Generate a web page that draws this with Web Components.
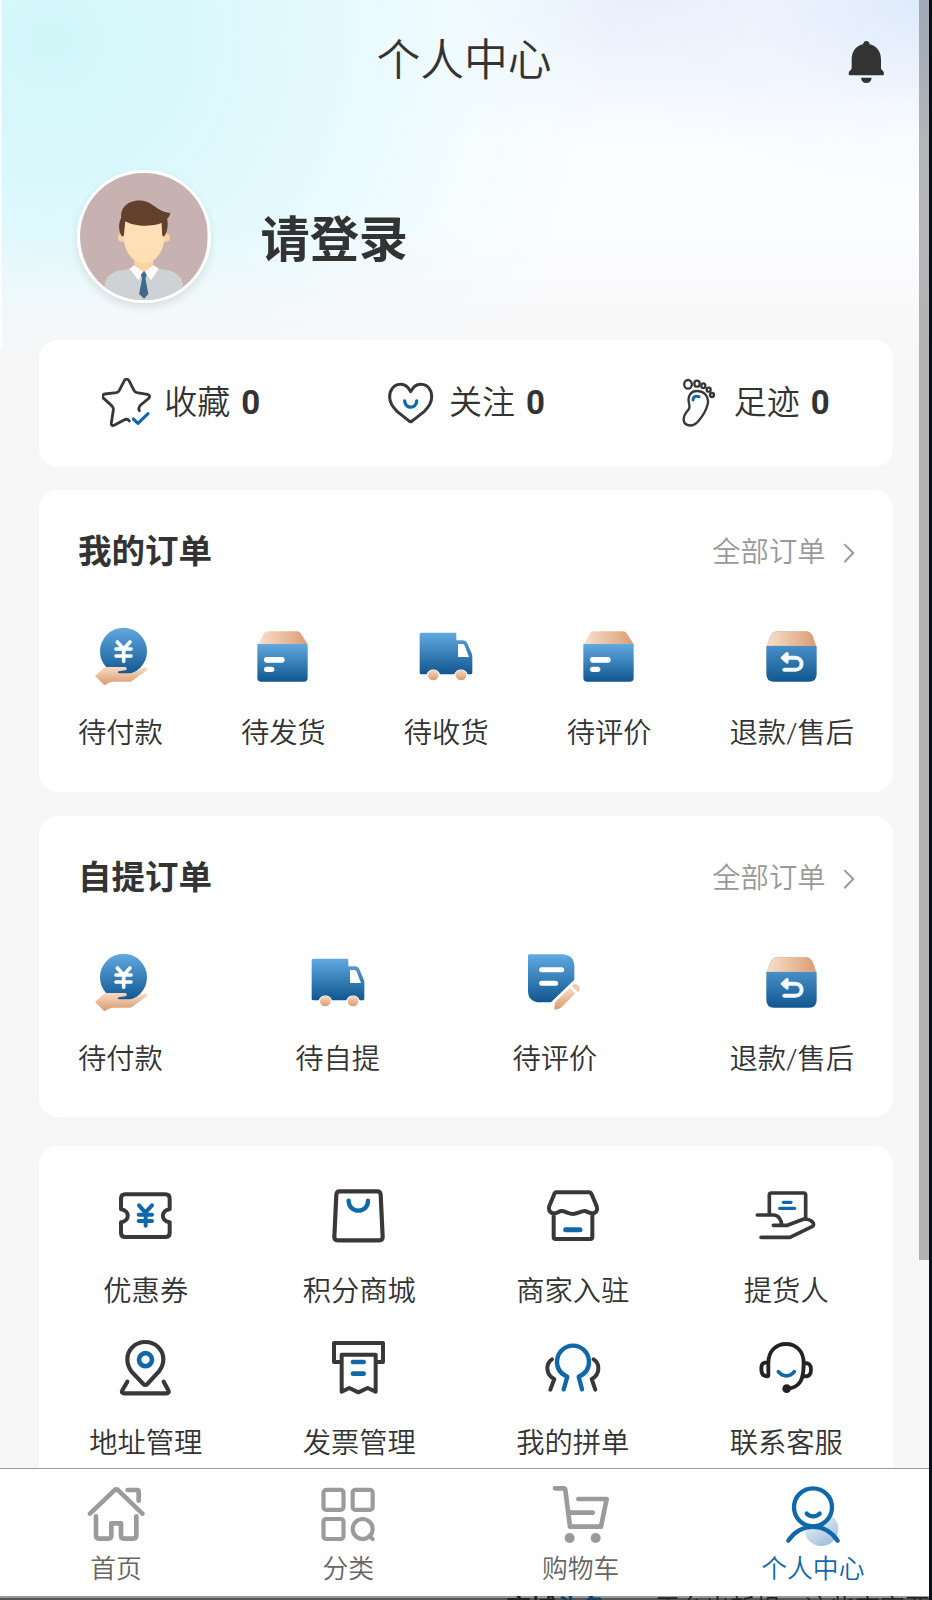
<!DOCTYPE html>
<html lang="zh-CN">
<head>
<meta charset="utf-8">
<title>个人中心</title>
<style>
  html, body {
    margin: 0;
    height: 1600px;
    overflow: hidden;
  }
  body {
    background: #0b0e17;
    color: #333;
    font-family: Roboto, "Noto Sans CJK SC", sans-serif;
    font-size: 28.3px;
    font-weight: 350;
  }
</style>
</head>
<body>
<user-center></user-center>

<script>
(function (customElements) {

    // Shared gradients for the filled order icons.
    const DEFS = `
  <defs>
    <linearGradient id="blue" x1="0" y1="0" x2="0" y2="1"><stop offset="0" stop-color="#61a9e1"/><stop offset="1" stop-color="#11568f"/></linearGradient>
    <linearGradient id="blue2" x1="0" y1="0" x2="0" y2="1"><stop offset="0" stop-color="#478fc8"/><stop offset="1" stop-color="#11568f"/></linearGradient>
    <linearGradient id="skin" x1="0" y1="0" x2="0" y2="1"><stop offset="0" stop-color="#f6dcc6"/><stop offset="1" stop-color="#dc9a6e"/></linearGradient>
    <linearGradient id="lid" x1="0" y1="0" x2="1" y2="0"><stop offset="0" stop-color="#f8e0cc"/><stop offset="1" stop-color="#db9c73"/></linearGradient>
    <linearGradient id="halo" x1="0" y1="0" x2=".6" y2="1"><stop offset="0" stop-color="#fff"/><stop offset="1" stop-color="#a3c1dc"/></linearGradient>
  </defs>`;

    const ICONS = {
        bell: ['1140 116 120 138', `
      <path fill="#333" d="M1201 122c6 0 9 4 10 10 22 5 34 22 34 46v25c0 6 9 8 9 17 0 3-2 5-5 5h-96c-3 0-5-2-5-5 0-9 9-11 9-17v-25c0-24 12-41 34-46 1-6 4-10 10-10z"/>
      <path fill="#333" d="M1185 232h32c-1 10-7 16-16 16s-15-6-16-16z"/>`],
        star: ['215 117 150 150', `
      <path class="line" stroke-width="8.500" d="M327 215c-4-7-1-12 4-17l24-20c5-5 2-11-4-12l-31-5c-5-1-7-3-9-7l-15-29c-4-6-11-6-14 0l-15 29c-2 4-4 6-9 7l-34 4c-7 1-10 8-4 13l24 22c4 4 6 8 5 13l-6 39c-1 8 4 9 10 6l28-15c5-3 12-4 16 3"/>
      <path class="accent" stroke-width="9.500" d="M309 240l14 13 30-29"/>`],
        heart: ['1069 117 150 150', `
      <path class="line" stroke-width="9" d="M1140 158c8-16 20-23 32-22 20 1 32 18 31 39 0 18-10 30-22 42l-35 28c-4 4-8 4-12 0l-35-28c-12-12-22-24-22-42-1-21 12-38 31-39 13-1 24 6 32 22z"/>
      <path class="accent" stroke-width="10" d="M1122 186c2 25 35 24 36 0"/>`],
        foot: ['633 117 150 150', `
      <g class="line" stroke-width="7"><ellipse cx="681" cy="136" rx="11.500" ry="13"/><ellipse cx="708" cy="134" rx="8" ry="9"/><ellipse cx="727" cy="140" rx="6" ry="7"/><circle cx="743" cy="152" r="6"/><circle cx="753" cy="168" r="6"/>
      <path d="M684 193c-5-22 6-37 22-37 26 0 39 18 34 40-5 20-15 36-27 49-11 13-25 17-36 12-13-6-11-25-2-36 8-9 13-14 9-28z"/></g>
      <path class="accent" stroke-width="9" stroke-linecap="butt" d="M696 183c0-10 8-14 18-10"/>`],
        pay: ['81 72 198 198', `
      <circle fill="url(#blue)" cx="190.500" cy="154" r="70.500"/>
      <path fill="none" stroke="#fff" stroke-width="11" stroke-linecap="round" stroke-linejoin="round" d="M172 126l19 21 19-21M168 147h45M168 168h45M191 148v36"/>
      <path fill="url(#skin)" d="M105 228l27-25q3-2 7-2h56c7 0 7 9 1 10l-20 3c-3 1-3 6 1 6h38l36-16c8-4 13 3 8 8l-43 31q-3 2-6 2h-49c-12 1-15 3-25 9q-3 2-6-1z"/>`],
        box: ['570 72 198 198', `
      <path fill="url(#lid)" d="M594 133l18-33q4-6 11-6h89q6 0 10 6l21 33z"/>
      <path fill="url(#blue)" d="M592 132h151v101q0 12-12 12H604q-12 0-12-12z"/>
      <rect x="612" y="171" width="62" height="17" rx="8.500" fill="#fff"/><rect x="612" y="200" width="31" height="16" rx="8" fill="#fff"/>`],
        truck: ['731 59 198 198', `
      <path fill="url(#blue)" d="M756 85h101q4 0 4 4v19h21q8 0 12 8l14 34q1 3 1 7v48q0 5-5 5h-9a21 21 0 0 0-40 0h-43a21 21 0 0 0-40 0h-16q-5 0-5-5V90q0-5 5-5z"/>
      <path fill="#fff" d="M866 119h14q4 0 6 5l13 34h-33z"/>
      <circle fill="url(#skin)" cx="792" cy="212" r="16"/><circle fill="url(#skin)" cx="875" cy="212" r="16"/>`],
        note: ['127 60 198 198', `
      <path fill="url(#blue)" d="M149 73h101q34 3 34 36v40l-70 68h-33q-36-1-36-35V78q0-5 4-5z"/>
      <path fill="none" stroke="#fff" stroke-width="15" stroke-linecap="round" d="M186 119h60M186 160h42"/>
      <path fill="url(#skin)" d="M270 173l17 17-43 43q-3 2-7 3l-10 3q-3 0-3-4l2-15q0-3 3-6z"/>
      <path fill="#efcbae" d="M276 167q7-8 15-4 8 5 10 12 1 6-6 12z"/>`],
        refund: ['897 72 198 198', `
      <path fill="url(#lid)" stroke="#b9b4ae" stroke-width="1.500" d="M921 138l10-28q7-15 17-16h92q12 1 19 16l9 28z"/>
      <path fill="url(#blue2)" d="M919 138h151v84q0 23-23 23H942q-23 0-23-23z"/>
      <path fill="none" stroke="#f3f8fc" stroke-width="12" stroke-linecap="round" stroke-linejoin="round" d="M975 173h31c25 1 25 36 0 36h-33"/>
      <path fill="#f3f8fc" d="M963 171l15-14q8-3 8 4v25q-1 8-8 4l-15-14q-3-3 0-5z"/>`],
        coupon: ['159 40 198 198', `
      <path class="line" stroke-width="12" d="M196 74h120q13 0 13 13v32c-27 4-27 35 0 39v31q0 13-13 13H196q-13 0-13-13v-31c27-4 27-35 0-39V87q0-13 13-13z"/>
      <path class="accent" stroke-width="12" d="M237 107l19 22 20-22M236 135h40M236 154h40M257 130v38"/>`],
        bag: ['799 38 198 198', `
      <path class="line" stroke-width="12.500" d="M840 63h113q9 0 10 10l6 127q0 10-10 10H834q-10 0-10-10l6-127q1-10 10-10z"/>
      <path class="accent" stroke-width="13" d="M867 91c0 40 58 40 58 0"/>`],
        shop: ['180 39 198 198', `
      <path class="line" stroke-width="12" d="M229 67h98q5 0 8 6l15 36c4 11-1 21-13 21-10 0-16-7-24-7-10 0-22 9-34 9-13 0-24-9-34-9-9 0-14 8-24 7-13-1-17-13-13-22l14-34q2-7 7-7zM221 131v71q0 5 6 5h104q6 0 6-5v-71"/>
      <path class="accent" stroke-width="15" d="M257 179h43"/>`],
        pickup: ['819 40 198 198', `
      <path class="line" stroke-width="11" stroke-linecap="butt" d="M832 136h48c15 0 25 14 25 31M868 136V76q0-6 6-6h97q6 0 6 6v70M880 167h42l50-19c24 0 36 17 24 23l-66 32h-87"/>
      <path class="accent" stroke-width="10" stroke-linecap="butt" d="M910 98h23M899 116h45"/>`],
        place: ['159 496 198 198', `
      <path class="line" stroke-width="12.500" d="M256 517c-32 0-54 24-54 52 0 14 5 26 12 36l36 38q6 6 12 0l35-38c8-10 13-22 13-36 0-28-22-52-54-52zM202 636l-15 26q-4 9 5 9h128q9 0 5-9l-14-26"/>
      <circle class="accent" stroke-width="14" cx="256.500" cy="570" r="19.500"/>`],
        invoice: ['799 496 198 198', `
      <path class="line" stroke-width="12" stroke-linejoin="round" d="M846 577h-23v-57h147v57h-22M846 666V555h102v111l-24-11-28 13-27-13z"/>
      <path class="accent" stroke-width="14" d="M880 577h32M880 612h32"/>`],
        group: ['180 496 198 198', `
      <path class="accent" stroke-width="13" d="M251 659l11-38c-23-10-32-26-31-47 2-28 24-46 48-46s46 18 48 46c1 21-8 37-31 47l10 38"/>
      <path class="line" stroke-width="12" d="M216 569c-21 14-18 48 7 59l-12 32M341 569c21 14 18 48-6 59l11 32"/>`],
        service: ['819 496 198 198', `
      <g class="line" style="stroke:#232323" stroke-width="11.500"><path d="M865 580c0-36 23-57 53-57s53 21 53 57c0 45-7 74-51 77M865 580v37q0 3-3 3c-12 0-18-6-18-22s4-20 21-20zM971 580c16-1 22 5 22 20s-6 21-22 20"/></g>
      <circle fill="#232323" cx="920" cy="657" r="13"/>
      <path class="accent" stroke-width="11" d="M895 606c14 17 34 17 48 0"/>`],
        home: ['249 93 198 198', `
      <path class="mute" stroke-width="14" d="M270 191l73-70q6-5 12 0l72 70M383 120h28q5 0 5 6v26M288 199v57q0 10 9 10h28q9 0 9-10v-36h29v36q0 10 9 10h27q10 0 10-10v-57"/>`],
        category: ['946 93 198 198', `
      <g class="mute" stroke-width="12.500"><rect x="971.500" y="119.500" width="60" height="60" rx="8"/><rect x="1059" y="119.500" width="60" height="60" rx="8"/><rect x="971.500" y="207" width="60" height="60" rx="8"/><circle cx="1089" cy="237" r="30"/><path d="M1109 258l10 9"/></g>`],
        cart: ['245 93 198 198', `
      <path class="mute" stroke-width="14" d="M266 115h26q4 0 5 5l14 110h93l17-83h-85M305 188h74"/>
      <circle fill="#999" cx="310" cy="264" r="15"/><circle fill="#999" cx="388" cy="264" r="15"/>`],
        profile: ['942 93 198 198', `
      <circle fill="url(#halo)" cx="1066" cy="237" r="51"/>
      <circle cx="1041" cy="172" r="50" fill="#fff"/>
      <g class="accent" stroke-width="13"><circle cx="1041" cy="172" r="57"/><path d="M1022 191c10 11 29 11 39 0" /><path d="M967 272c36-54 110-56 148 0"/></g>`],
        arrow: ['1146 604 44 72', `
      <path fill="none" stroke="#999" stroke-width="6" d="M1153 613l27 27-27 28"/>`],
        avatar: ['237 515 386 386', `
      <path fill="#c8b1b1" d="M237 515h386v386H237z"/>
      <path fill="#cfd2d4" d="M312 860c0-36 28-50 62-52l28-8h58l32 8c34 3 57 20 58 54v40H312z"/>
      <path fill="#fdd3a2" d="M402 770h57v36q-5 11-28 13-24-2-29-13z"/>
      <circle fill="#fdd3a2" cx="364" cy="711" r="12"/><circle fill="#fdd3a2" cx="497" cy="711" r="12"/>
      <path fill="#ffe0b6" d="M370 655h123v52c-2 50-30 81-62 81s-60-31-62-81z"/>
      <path fill="#633f2e" d="M362 650c-4-33 24-52 54-52 42 0 48 32 94 38-2 14-8 13-9 19 4 18 0 39-9 52q-5 1-6-4l-2-37c-30 12-82 12-110-5l-4 42q-1 5-6 4c-10-14-12-38-2-57z"/>
      <path fill="#fff" d="M400 794l31 21 29-21 15 10-23 36-21-25-17 24-27-34z"/>
      <path fill="#3f6a89" d="M431 811l8 13-4 10 9 47-13 15-15-15 9-47-4-10z"/>`]
    };

    /**
     * Draws one icon. The drawing fills the host's box.
     */
    class UcIcon extends HTMLElement {
        constructor() {
            super();
            this.attachShadow({ mode: 'open' });
        }

        connectedCallback() {
            const [viewBox, body] = ICONS[this.getAttribute('name')];
            this.shadowRoot.innerHTML = `
      <style>
        :host { display: block; flex: none; width: 66px; height: 66px; }
        svg { display: block; width: 100%; height: 100%; }
        .line, .accent, .mute { fill: none; stroke-linecap: round; stroke-linejoin: round; }
        .line { stroke: #383838; }
        .accent { stroke: #1068a8; }
        .mute { stroke: #9b9b9b; }
      </style>
      <svg viewBox="${viewBox}" aria-hidden="true">${DEFS}${body}</svg>`;
        }
    }

    /**
     * Registers an element whose shadow root is cloned from fixed markup.
     * @param {string} name - The tag name.
     * @param {string} html - The styles and markup of the shadow root.
     */
    const define = (name, html) => {
        const template = document.createElement('template');
        template.innerHTML = html;
        customElements.define(name, class extends HTMLElement {
            constructor() {
                super();
                this.attachShadow({ mode: 'open' }).appendChild(template.content.cloneNode(true));
            }
        });
    };

    customElements.define('uc-icon', UcIcon);

    define('uc-card', `
      <style>
        :host { display: block; box-sizing: border-box; background: #fff; border-radius: 19px; }
      </style>
      <slot></slot>`);

    define('uc-header', `
      <style>
        :host { display: flex; align-items: center; height: 118px; padding: 0 45px 0 80px; }
        h1 { flex: 1; margin: 4px 0 0 2px; font-size: 43.8px; line-height: 60px; font-weight: inherit; text-align: center; }
        uc-icon { width: 40px; height: 46px; margin: 5px -2px 0 0; }
      </style>
      <h1><slot></slot></h1>
      <uc-icon name="bell"></uc-icon>`);

    define('uc-user', `
      <style>
        :host { display: flex; align-items: center; gap: 50px; height: 133px; padding: 52px 0 37px 77px; }
        .avatar { border: 3px solid #fff; border-radius: 50%; overflow: hidden; box-shadow: 0 4px 8px rgba(0, 0, 0, .1); }
        uc-icon { width: 127.500px; height: 127.500px; }
        strong { padding-top: 6px; font-size: 49.2px; line-height: 66px; font-weight: 700; }
      </style>
      <div class="avatar"><uc-icon name="avatar"></uc-icon></div>
      <strong><slot></slot></strong>`);

    define('uc-stats', `
      <style>
        :host { display: grid; grid-template-columns: repeat(3, 1fr); height: 125px; padding-bottom: 2px; align-items: center; }
      </style>
      <slot></slot>`);

    /** Counter with an icon, its label and a number. */
    customElements.define('uc-stat', class extends HTMLElement {
        connectedCallback() {
            this.attachShadow({ mode: 'open' }).innerHTML = `
      <style>
        :host { display: flex; justify-content: center; align-items: center; font-size: 33px; line-height: 44px; }
        uc-icon { width: 50px; height: 50px; margin-right: 12px; }
        b { margin-left: 11px; }
      </style>
      <uc-icon name="${this.getAttribute('icon')}"></uc-icon><span><slot></slot></span><b>${this.getAttribute('count')}</b>`;
        }
    });

    /** Card title on the left, link to the full list on the right. */
    customElements.define('uc-orders', class extends HTMLElement {
        connectedCallback() {
            this.attachShadow({ mode: 'open' }).innerHTML = `
      <style>
        :host { display: block; box-sizing: border-box; height: 301.5px; padding: 38px 39px 0; }
        header { display: flex; align-items: center; justify-content: space-between; height: 48px; }
        h2 { margin: 0; font-size: 33.5px; line-height: 46px; }
        a { display: flex; align-items: center; gap: 16px; margin: 2px -2px 0 0; color: #999; line-height: 40px; }
        uc-icon { width: 14.500px; height: 24px; }
        .items { display: flex; justify-content: space-between; padding-top: 48px; }
      </style>
      <header><h2>${this.getAttribute('heading')}</h2><a>全部订单<uc-icon name="arrow"></uc-icon></a></header>
      <div class="items"><slot></slot></div>`;
        }
    });

    /** Icon over a label; used in the order cards, the tool grid and the tab bar. */
    customElements.define('uc-item', class extends HTMLElement {
        connectedCallback() {
            this.attachShadow({ mode: 'open' }).innerHTML = `
      <style>
        :host { display: flex; flex-direction: column; align-items: center; gap: var(--item-gap, 24px); line-height: 40px; white-space: nowrap; }
      </style>
      <uc-icon name="${this.getAttribute('icon')}"></uc-icon><span><slot></slot></span>`;
        }
    });

    define('uc-grid', `
      <style>
        :host { display: grid; grid-template-columns: repeat(4, 1fr); row-gap: 23.500px; padding: 37px 0 40px; --item-gap: 23px; }
      </style>
      <slot></slot>`);

    define('uc-tabbar', `
      <style>
        :host { display: grid; grid-template-columns: repeat(4, 1fr); box-sizing: border-box; height: 128px; padding-top: 12px; border-top: 1px solid #999; border-bottom-left-radius: 5px; background: #fff; color: #666; font-size: 25.800px; --item-gap: 2px; }
        ::slotted([active]) { color: #1068a8; }
      </style>
      <slot></slot>`);

    // Page behind the window, dimmed; only its top edge shows.
    define('uc-backdrop', `
      <style>
        :host { display: flex; height: 4px; overflow: hidden; padding-left: 506px; background: linear-gradient(#999 0 2px, #555 2px); color: #222; font-size: 25px; line-height: 25px; white-space: nowrap; }
        b { margin-right: 49px; }
        i { font-style: normal; color: #123f63; }
      </style>
      <b>商城<i>头条</i></b><span>平台出新规，这些商家要</span>`);

    define('user-center', `
      <style>
        :host { display: flex; flex-direction: column; position: relative; width: 929px; height: 1600px; background: #f7f7f7; }
        main {
          flex: 1; min-height: 0; overflow: hidden;
          background:
            linear-gradient(90deg, rgba(255, 255, 255, .75) 2.5px, transparent 2.5px) 0 0 / 100% 350px no-repeat,
            linear-gradient(transparent 225px, rgba(247, 247, 247, .75) 320px, #f7f7f7 370px),
            radial-gradient(ellipse 560px 560px at 50px 40px, #d1f7f9, #dbf8fc 28%, #e5fafe 50%, rgba(240, 252, 255, .8) 74%, rgba(252, 253, 255, 0)),
            radial-gradient(ellipse 330px 200px at 929px 0, rgba(220, 233, 251, .9), rgba(240, 245, 254, .5) 55%, rgba(252, 253, 255, 0)),
            radial-gradient(ellipse 560px 150px at 680px 0, #e6eefb, #f1f6fe 50%, rgba(252, 253, 255, 0)),
            #fcfdff;
        }
        .cards { display: flex; flex-direction: column; gap: 24px; width: 854px; padding-left: 39px; }
        .stats { margin-bottom: -1px; }
        .tools { margin-top: 4.500px; }
        .thumb { position: absolute; top: 0; right: 0; width: 9.700px; height: 1260px; background: rgba(0, 0, 0, .28); }
      </style>
      <main>
        <uc-header>个人中心</uc-header>
        <uc-user>请登录</uc-user>
        <div class="cards">
          <uc-card class="stats">
            <uc-stats>
              <uc-stat icon="star" count="0">收藏</uc-stat>
              <uc-stat icon="heart" count="0">关注</uc-stat>
              <uc-stat icon="foot" count="0">足迹</uc-stat>
            </uc-stats>
          </uc-card>
          <uc-card>
            <uc-orders heading="我的订单">
              <uc-item icon="pay">待付款</uc-item>
              <uc-item icon="box">待发货</uc-item>
              <uc-item icon="truck">待收货</uc-item>
              <uc-item icon="box">待评价</uc-item>
              <uc-item icon="refund">退款/售后</uc-item>
            </uc-orders>
          </uc-card>
          <uc-card>
            <uc-orders heading="自提订单">
              <uc-item icon="pay">待付款</uc-item>
              <uc-item icon="truck">待自提</uc-item>
              <uc-item icon="note">待评价</uc-item>
              <uc-item icon="refund">退款/售后</uc-item>
            </uc-orders>
          </uc-card>
          <uc-card class="tools">
            <uc-grid>
              <uc-item icon="coupon">优惠券</uc-item>
              <uc-item icon="bag">积分商城</uc-item>
              <uc-item icon="shop">商家入驻</uc-item>
              <uc-item icon="pickup">提货人</uc-item>
              <uc-item icon="place">地址管理</uc-item>
              <uc-item icon="invoice">发票管理</uc-item>
              <uc-item icon="group">我的拼单</uc-item>
              <uc-item icon="service">联系客服</uc-item>
            </uc-grid>
          </uc-card>
        </div>
      </main>
      <uc-tabbar>
        <uc-item icon="home">首页</uc-item>
        <uc-item icon="category">分类</uc-item>
        <uc-item icon="cart">购物车</uc-item>
        <uc-item icon="profile" active>个人中心</uc-item>
      </uc-tabbar>
      <uc-backdrop></uc-backdrop>
      <div class="thumb"></div>`);

})(window.customElements);
</script>
</body>
</html>
